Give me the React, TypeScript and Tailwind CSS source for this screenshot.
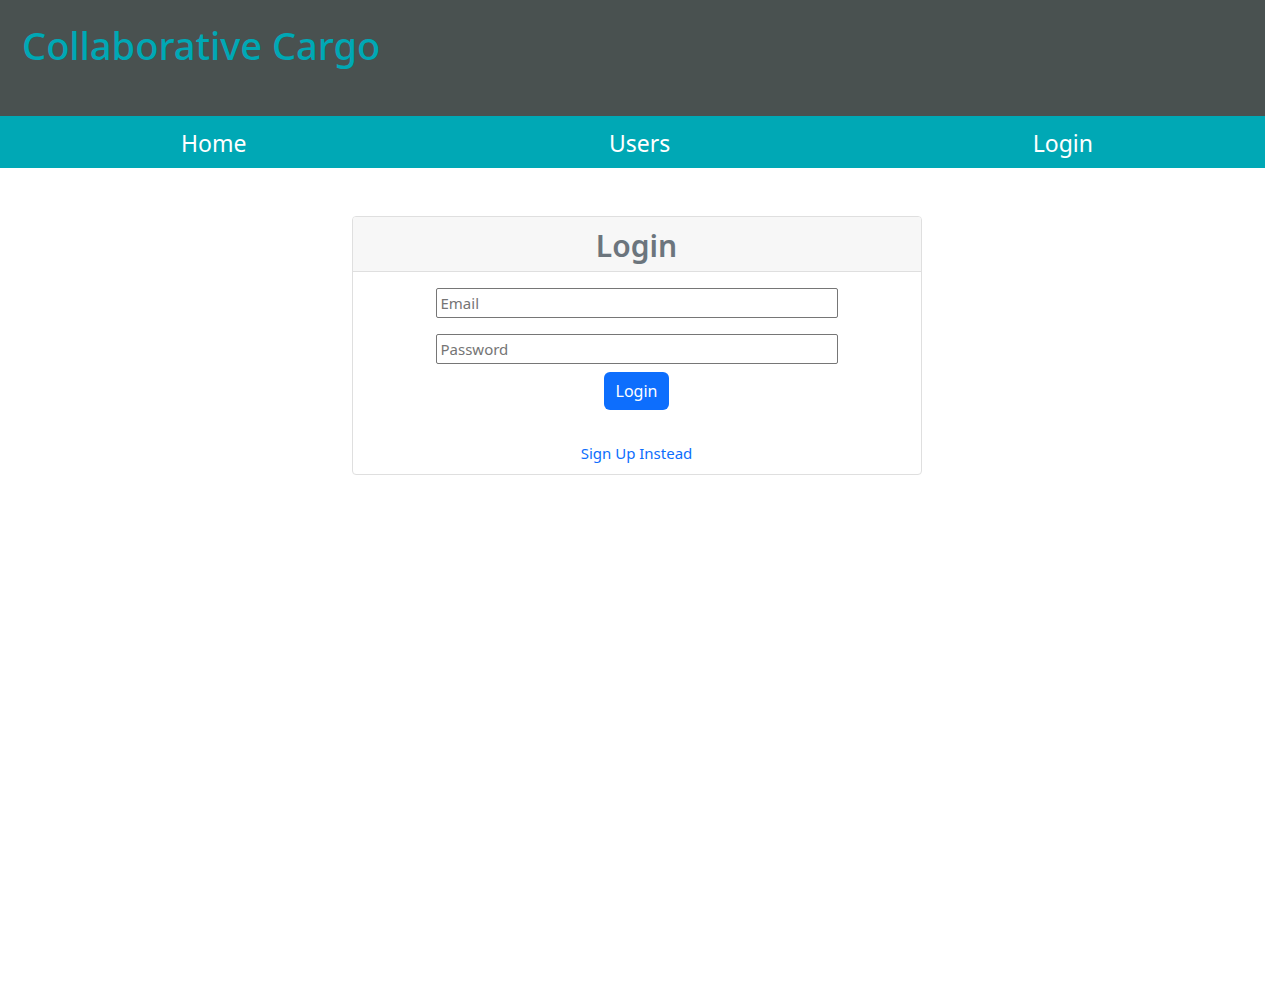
export default function App() {
  const font = { fontFamily: '"Segoe UI", "Noto Sans", "Open Sans", sans-serif' };
  return (
    <div style={font} className="min-h-[994px] bg-white">
      <header className="h-[116px] bg-[#495150] px-[22px] pt-[21px]">
        <h1 className="text-[38px] leading-[48px] font-medium text-[#00a8b5]">Collaborative Cargo</h1>
      </header>
      <nav className="h-[52px] bg-[#00a8b5] flex items-center justify-between pl-[181px] pr-[172px] text-white text-[23px] pt-[2px]">
        <a>Home</a>
        <a>Users</a>
        <a>Login</a>
      </nav>
      <main className="flex justify-center pt-[48px] pl-[8px]">
        <div className="w-[570px] border border-[#dfdfdf] rounded-[4px] overflow-hidden">
          <div className="h-[55px] bg-[#f7f7f7] border-b border-[#dfdfdf] flex items-center justify-center">
            <h2 className="text-[30px] font-semibold text-[#6c757d] leading-none pt-[3px]">Login</h2>
          </div>
          <div className="flex flex-col items-center pt-[16px] pb-[9px]">
            <input
              placeholder="Email"
              className="w-[402px] h-[30px] border border-[#767676] rounded-[2px] px-[4px] text-[15px] placeholder:text-[#757575]"
            />
            <input
              type="password"
              placeholder="Password"
              className="mt-[16px] w-[402px] h-[30px] border border-[#767676] rounded-[2px] px-[4px] text-[15px] placeholder:text-[#757575]"
            />
            <button className="mt-[8px] h-[38px] px-[12px] bg-[#0d6efd] text-white rounded-[6px] text-[16px]">
              Login
            </button>
            <a className="mt-[32px] text-[15px] text-[#0d6efd]">Sign Up Instead</a>
          </div>
        </div>
      </main>
    </div>
  );
}
